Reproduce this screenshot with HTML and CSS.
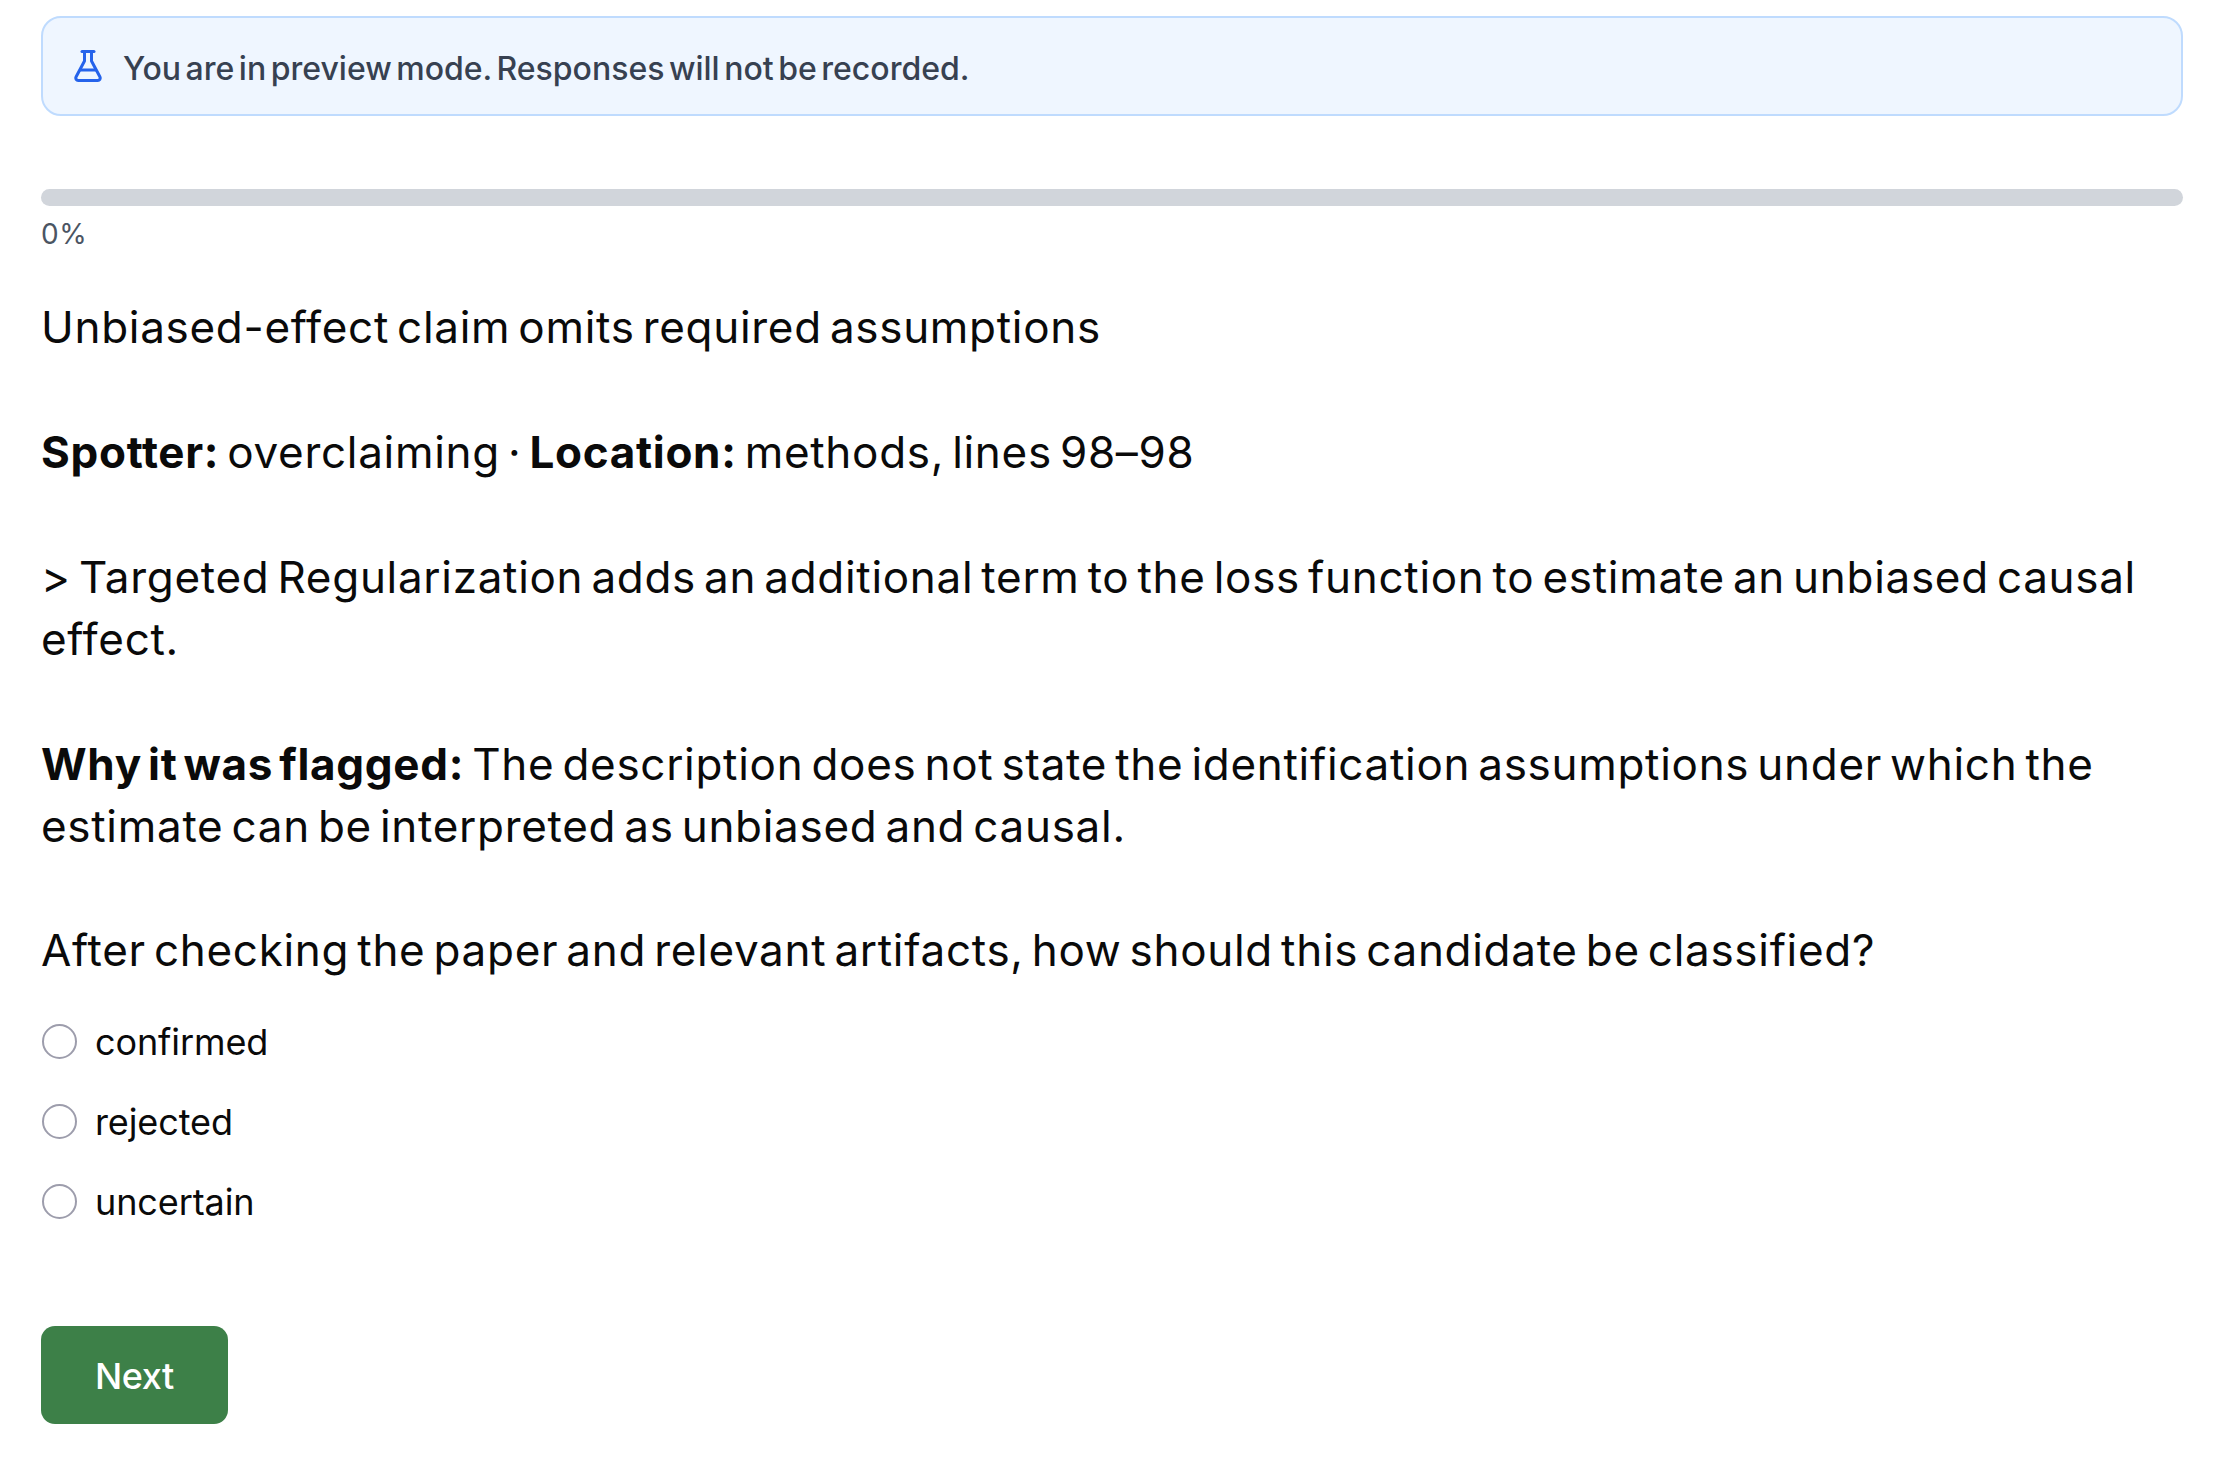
FILE: index.html
```html
<!DOCTYPE html>
<html lang="en">
<head>
<meta charset="utf-8">
<title>Preview</title>
<link rel="stylesheet" href="styles.css">
</head>
<body>
<main class="page">
  <div class="banner">
    <svg class="flask" viewBox="0 0 28 32" fill="none" stroke="currentColor" stroke-width="3" stroke-linecap="round" stroke-linejoin="round"><path d="M10.5 1.5v9.5L2 27a2.5 2.5 0 0 0 2.2 3.5h19.6a2.5 2.5 0 0 0 2.2-3.5L17.5 11V1.5"/><path d="M8 1.5h12"/><path d="M6.5 20h15"/></svg>
    <span>You are in preview mode. Responses will not be recorded.</span>
  </div>
  <div class="track"></div>
  <div class="percent">0%</div>
  <div class="content">
    <p>Unbiased-effect claim omits required assumptions</p>
    <p><strong>Spotter:</strong> overclaiming · <strong>Location:</strong> methods, lines 98–98</p>
    <p>&gt; Targeted Regularization adds an additional term to the loss function to estimate an unbiased causal effect.</p>
    <p><strong>Why it was flagged:</strong> The description does not state the identification assumptions under which the estimate can be interpreted as unbiased and causal.</p>
  </div>
  <div class="question">After checking the paper and relevant artifacts, how should this candidate be classified?</div>
  <div class="options">
    <label class="option"><span class="radio"></span><span class="option-text">confirmed</span></label>
    <label class="option"><span class="radio"></span><span class="option-text">rejected</span></label>
    <label class="option"><span class="radio"></span><span class="option-text">uncertain</span></label>
  </div>
  <button class="next" type="button">Next</button>
</main>
</body>
</html>
```
FILE: styles.css
```css
* { box-sizing: border-box; }
html, body { margin: 0; background: #fff; }
body { font-family: Inter, "Liberation Sans", sans-serif; color: #0a0a0a; font-variant-ligatures: common-ligatures; }
.page { padding: 16px 35px 0 41px; }
.banner {
  display: flex; align-items: center; gap: 21px;
  height: 100px; padding: 4px 0 0 31px;
  background: #eff6ff; border: 2px solid #bfdbfe; border-radius: 20px;
  color: #374151; font-size: 32px; font-weight: 500; letter-spacing: 0; word-spacing: -4px;
}
.flask { width: 28px; height: 32px; margin-top: -4px; color: #2563eb; flex: none; }
.track { margin-top: 73px; height: 17px; border-radius: 9px; background: #d1d5db; }
.percent { margin-top: 8px; font-size: 28px; line-height: 40px; color: #4b5563; letter-spacing: 0.6px; }
.content { margin-top: 42px; font-size: 44px; line-height: 62px; letter-spacing: 0.7px; word-spacing: -5px; }
.content p { margin: 0 0 63px; }
.content strong { font-weight: 700; }
.question { margin-top: -1px; font-size: 44px; line-height: 62px; letter-spacing: 0.7px; word-spacing: -5px; }
.options { margin-top: 40px; display: flex; flex-direction: column; gap: 40px; }
.option { display: flex; align-items: center; gap: 18px; height: 40px; padding-left: 1px; font-size: 36px; letter-spacing: -0.1px; }
.option-text { padding-top: 2px; }
.radio { width: 35px; height: 35px; border-radius: 50%; border: 2px solid #9d9dac; background: #fff; flex: none; }
.next {
  display: block; margin-top: 105px; width: 187px; height: 98px; padding: 2px 0 0;
  background: #3d8048; color: #fff; border: 0; border-radius: 14px;
  font: 500 36px Inter, sans-serif; letter-spacing: -0.4px;
}
```
